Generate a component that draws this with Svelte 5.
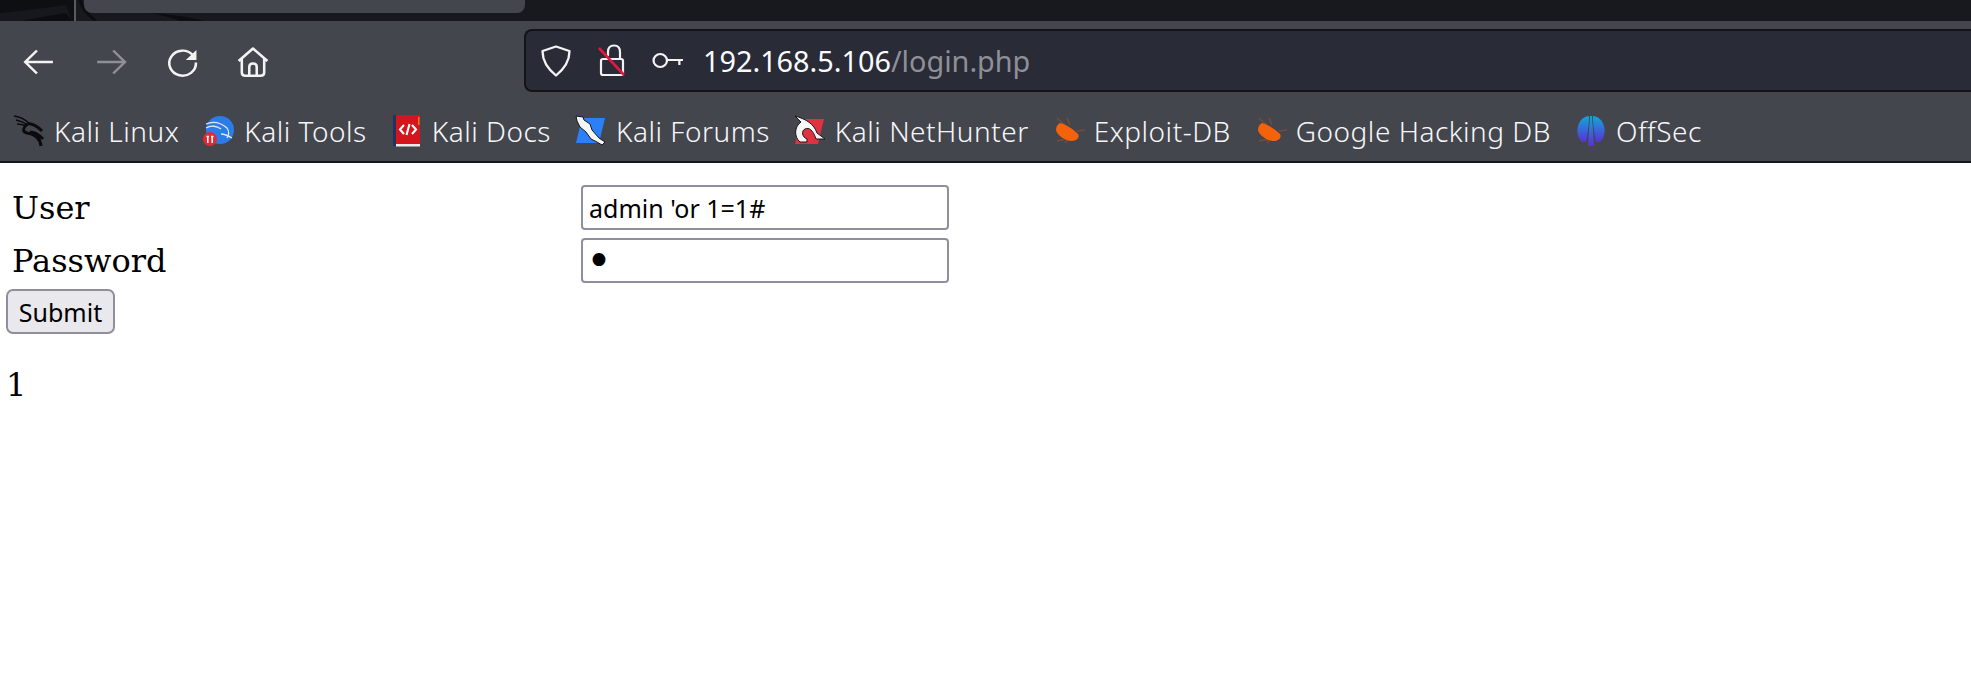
<script>
  const bookmarks = [
    { name: 'Kali Linux', icon: 'dragon' },
    { name: 'Kali Tools', icon: 'tools' },
    { name: 'Kali Docs', icon: 'docs' },
    { name: 'Kali Forums', icon: 'forums' },
    { name: 'Kali NetHunter', icon: 'nethunter' },
    { name: 'Exploit-DB', icon: 'bug' },
    { name: 'Google Hacking DB', icon: 'bug' },
    { name: 'OffSec', icon: 'offsec' }
  ];
</script>

<div class="browser">
  <div class="tabbar">
    <svg class="wallpaper" width="260" height="21" viewBox="0 0 260 21" fill="none">
      <path d="M0 0 H75 V21 H0 Z" fill="#0e0f13" />
      <path d="M0 13 C25 10 50 8 66 5 L72 21 H0 Z" fill="#17181d" />
      <path d="M22 21 C40 17 55 15 66 13 L72 21 Z" fill="#0c0d10" />
      <path d="M75 0 V21" stroke="#5a5b60" stroke-width="2" />
      <path d="M80 0 C82 8 86 14 96 21" stroke="#0c0d10" stroke-width="3" />
      <path d="M150 13 C170 14 190 17 205 21 L180 21 C170 17 160 15 150 13 Z" fill="#0c0d10" />
    </svg>
    <div class="tab"></div>
  </div>

  <div class="nav">
    <div class="navbtns">
      <svg class="ic" viewBox="0 0 30 30" preserveAspectRatio="none" fill="none" stroke="#f3f3f4" stroke-width="2.4">
        <path d="M3 15 H29 M14 3.5 L3 15 L14 26.5" />
      </svg>
      <svg class="ic" viewBox="0 0 30 30" preserveAspectRatio="none" fill="none" stroke="#8f9095" stroke-width="2.4">
        <path d="M3 15 H29 M18 3.5 L29 15 L18 26.5" />
      </svg>
      <svg class="ic" viewBox="0 0 30 30" preserveAspectRatio="none" fill="none" stroke="#f3f3f4" stroke-width="2.4">
        <path d="M26 8 A12.5 12.5 0 1 0 29 15.5" />
        <path d="M29.5 3 V13 H19.5 Z" fill="#f3f3f4" stroke="none" />
      </svg>
      <svg class="ic" viewBox="0 0 30 30" preserveAspectRatio="none" fill="none" stroke="#f3f3f4" stroke-width="2.4" stroke-linejoin="round">
        <path d="M1.5 14 L15 1.5 L28.5 14 M4.5 11.5 V25.5 Q4.5 28.8 8 28.8 H22 Q25.5 28.8 25.5 25.5 V11.5" />
        <path d="M11.5 28.8 V20 Q11.5 16.5 15 16.5 Q18.5 16.5 18.5 20 V28.8" />
      </svg>
    </div>
    <div class="urlbar">
      <svg width="30" height="32" viewBox="0 0 28 32" preserveAspectRatio="none" fill="none" stroke="#f3f3f4" stroke-width="2.2">
        <path d="M14 1.5 L26.5 6 Q27 19 14 30.5 Q1 19 1.5 6 Z" stroke-linejoin="round" />
      </svg>
      <svg class="lock" width="28" height="33" viewBox="0 0 28 33" fill="none">
        <path d="M3 17 Q3 15 5 15 H23 Q25 15 25 17 V29 Q25 31 23 31 H5 Q3 31 3 29 Z" stroke="#f3f3f4" stroke-width="2.2" />
        <path d="M10 12 V8 Q10 1.5 16 1.5 Q22 1.5 22 8 V15" stroke="#f3f3f4" stroke-width="2.2" />
        <path d="M1 4 L26 31" stroke="#e5173f" stroke-width="2.6" />
      </svg>
      <svg class="key" width="32" height="17" viewBox="0 0 31 17" preserveAspectRatio="none" fill="none" stroke="#f3f3f4" stroke-width="2.2">
        <circle cx="8" cy="8.5" r="6.5" />
        <path d="M14.5 8 H30 M26.5 8 V13" />
      </svg>
      <span class="url">192.168.5.106<span class="path">/login.php</span></span>
    </div>
  </div>

  <div class="bookmarks">
    {#each bookmarks as b}
      <div class="bm">
        {#if b.icon === 'dragon'}
          <svg class="fav" viewBox="0 0 32 32" fill="none" stroke="#0b0b0d" stroke-width="3">
            <path d="M1 1 C8 2 14 6 17 9 M3 5 C8 6 12 8 15 10 M4 9 C8 9 11 10 14 11" stroke-width="1.5" />
            <path d="M14 9 C10 13 9 17 14 18 C21 19 27 22 28 31 M14 9 C18 8 24 11 29 16 M17 17 C21 17 25 19 30 24" />
          </svg>
        {:else if b.icon === 'tools'}
          <svg class="fav" viewBox="0 0 32 32">
            <circle cx="17" cy="15" r="14" fill="#2a7de9" />
            <path d="M3 9 C10 6 18 8 24 13 C26 16 26 20 24 23 M3 13 C8 10 14 11 18 14 M18 19 C21 19 24 20 29 23" fill="none" stroke="#dfe8f7" stroke-width="1.3" />
            <circle cx="7" cy="24" r="7" fill="#e02a33" />
            <path d="M3.5 21.5 H6 M4.8 21.5 V28 M8 21.5 H10.5 M9.2 21.5 V28" stroke="#fff" stroke-width="1.5" />
          </svg>
        {:else if b.icon === 'docs'}
          <svg class="fav" viewBox="0 0 32 32">
            <rect x="2" y="0" width="4" height="31" fill="#1f3461" />
            <rect x="5" y="0" width="24" height="29" fill="#d4151b" />
            <rect x="5" y="29" width="24" height="2.5" fill="#f0eaea" />
            <rect x="27" y="2" width="1.5" height="8" fill="#e08020" />
            <path d="M13 10 L9 14.5 L13 19 M21 10 L25 14.5 L21 19 M18.5 9 L15.5 20" fill="none" stroke="#fff" stroke-width="2.1" />
          </svg>
        {:else if b.icon === 'forums'}
          <svg class="fav" viewBox="0 0 32 32">
            <path d="M7 3 H30 L24 28 H1 Z" fill="#2a81f7" />
            <path d="M1 1 L8 2 L9 5 L15 9 L17 15 L24 23 L30 27 L27 30 L22 27 L16 24 L11 17 L5 12 L2 6 Z" fill="#f5f5f5" stroke="#16171a" stroke-width="1" />
          </svg>
        {:else if b.icon === 'nethunter'}
          <svg class="fav" viewBox="0 0 32 32">
            <path d="M8 4 H30 L24 29 H1 Z" fill="#e13040" />
            <path d="M1 1 C12 4 20 9 23 18 L31 24 L22 24 C19 15 15 12 11 14 C7 16 8 22 13 24 L13 27 L6 27 C0 22 0 12 7 7 Z" fill="#f6f6f6" stroke="#16171a" stroke-width="1" />
          </svg>
        {:else if b.icon === 'bug'}
          <svg class="fav" viewBox="0 0 32 32">
            <path d="M4 3 L12 10 M24 16 L32 15 M4 26 L14 24 M12 28 L16 24 M14 3 L17 10" stroke="#8a5030" stroke-width="1.6" opacity=".7" />
            <path d="M7 8 C12 9 20 14 25 19 C27 22 24 26 19 26 C12 26 4 20 3 15 C3 11 5 9 7 8 Z" fill="#f4620c" />
          </svg>
        {:else}
          <svg class="fav" viewBox="0 0 32 32">
            <defs>
              <linearGradient id="off" x1="0" y1="0" x2="0" y2="1">
                <stop offset="0" stop-color="#10a8d8" />
                <stop offset="1" stop-color="#5a30d8" />
              </linearGradient>
            </defs>
            <path d="M14 1 C3 2 -2 18 7 27 L11 27 C13 18 14 10 14 1 Z" fill="url(#off)" />
            <path d="M18 1 C29 2 34 18 25 27 L21 27 C19 18 18 10 18 1 Z" fill="url(#off)" />
            <path d="M15 1 H17 L19 31 H13 Z" fill="url(#off)" />
          </svg>
        {/if}
        <span>{b.name}</span>
      </div>
    {/each}
  </div>
</div>

<main>
  <form class="login">
    <label for="user">User</label>
    <input id="user" type="text" value="admin 'or 1=1#" />
    <label for="pass">Password</label>
    <input id="pass" type="password" value="1" />
  </form>
  <button type="button">Submit</button>
  <p>1</p>
</main>

<style>
  :global(body) {
    background: #fff;
    overflow: hidden;
  }
  .browser {
    font-family: "Noto Sans", sans-serif;
    border-bottom: 2px solid #16171b;
  }
  .tabbar {
    position: relative;
    display: flex;
    height: 21px;
    padding-left: 84px;
    background: #18191e;
    overflow: hidden;
  }
  .wallpaper {
    position: absolute;
    left: 0;
    top: 0;
  }
  .tab {
    position: relative;
    width: 441px;
    height: 13px;
    background: #44464e;
    border-radius: 0 0 8px 8px;
  }
  .nav {
    display: flex;
    align-items: center;
    height: 79px;
    background: #44464e;
  }
  .navbtns {
    display: flex;
    align-items: center;
    gap: 39.5px;
    width: 524px;
    margin-top: 3px;
    padding-left: 22px;
    box-sizing: border-box;
    flex: none;
  }
  .ic {
    width: 32px;
    height: 30px;
    overflow: visible;
  }
  .urlbar {
    flex: 1;
    display: flex;
    align-items: center;
    height: 63px;
    box-sizing: border-box;
    background: #292b37;
    border: 2px solid #131417;
    border-right: none;
    border-radius: 8px 0 0 8px;
    color: #fbfbfe;
    padding-left: 15px;
  }
  .lock {
    margin-left: 27px;
  }
  .key {
    margin-left: 26px;
  }
  .url {
    margin-left: 19px;
    font-size: 28.8px;
  }
  .path {
    color: #8f9097;
  }
  .bookmarks {
    display: flex;
    align-items: center;
    gap: 24px;
    height: 61px;
    padding-left: 13px;
    background: #44464e;
    color: #f6f6f8;
    font-size: 28px;
    font-weight: 300;
    letter-spacing: 0.5px;
  }
  .bm {
    display: flex;
    align-items: center;
    gap: 9px;
  }
  .fav {
    width: 32px;
    height: 32px;
    flex: none;
  }
  main {
    font-family: "DejaVu Serif", serif;
    font-size: 32px;
    color: #000;
    padding: 22px 0 0 6px;
  }
  .login {
    display: grid;
    grid-template-columns: 575px 368px;
    row-gap: 8px;
    align-items: center;
    margin-bottom: 6px;
  }
  label {
    padding-left: 6px;
  }
  input {
    height: 45px;
    box-sizing: border-box;
    border: 2px solid #8f8f9d;
    border-radius: 4px;
    padding: 0 6px;
    font: 25px "Noto Sans", sans-serif;
    color: #000;
    width: 100%;
  }
  #pass {
    font: 44px "DejaVu Sans", sans-serif;
    padding: 0 3px;
  }
  button {
    display: block;
    width: 109px;
    height: 45px;
    box-sizing: border-box;
    border: 2px solid #8f8f9d;
    border-radius: 7px;
    background: #e9e9ed;
    font: 25px "Noto Sans", sans-serif;
    color: #000;
    padding: 0;
  }
  p {
    margin: 31px 0 0 0;
    line-height: 40px;
  }
</style>
